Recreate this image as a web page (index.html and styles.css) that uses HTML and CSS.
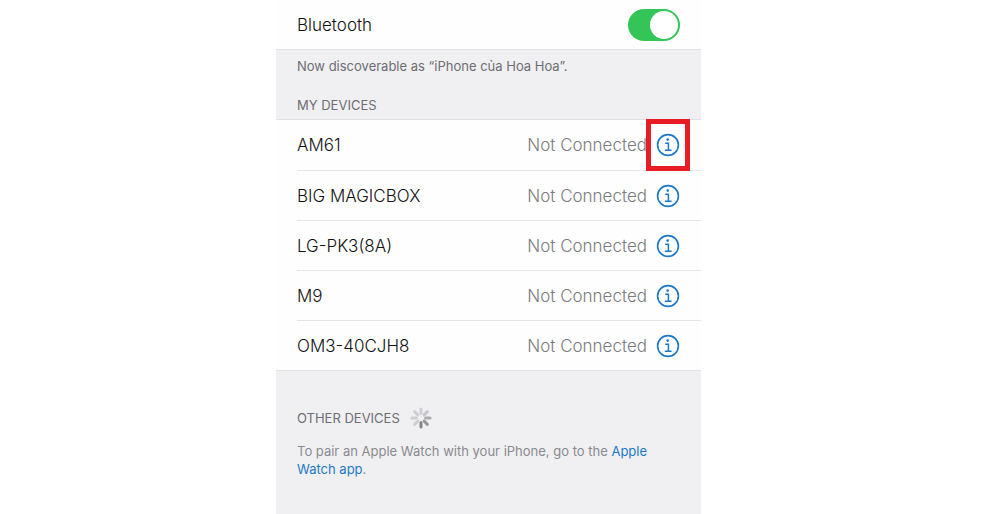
FILE: index.html
```html
<!DOCTYPE html>
<html lang="en">
<head>
  <meta charset="UTF-8" />
  <meta name="viewport" content="width=device-width, initial-scale=1.0" />
  <title>Bluetooth</title>
  <link rel="stylesheet" href="styles.css">
</head>
<body>
  <svg width="0" height="0" class="defs" aria-hidden="true">
    <symbol id="info" viewBox="0 0 24 24">
      <circle cx="12" cy="12" r="10.4" fill="none" stroke="currentColor" stroke-width="1.6" />
      <circle cx="11.7" cy="6.6" r="1.3" fill="currentColor" />
      <path d="M9.2 10.2H12.4V17.2M8.8 17.2H15.6" fill="none" stroke="currentColor" stroke-width="1.5" />
    </symbol>
  </svg>

  <main class="settings">
    <label class="row toggle-row" for="bluetooth">
      <span class="name">Bluetooth</span>
      <input type="checkbox" id="bluetooth" class="switch" checked />
    </label>

    <p class="note">Now discoverable as “iPhone của Hoa Hoa”.</p>
    <h2 class="heading">MY DEVICES</h2>

    <ul class="devices">
      <li class="row">
        <span class="name">AM61</span>
        <span class="status">Not Connected</span>
        <button class="info marked" aria-label="AM61 info"><svg><use href="#info" /></svg></button>
      </li>
      <li class="row">
        <span class="name">BIG MAGICBOX</span>
        <span class="status">Not Connected</span>
        <button class="info" aria-label="BIG MAGICBOX info"><svg><use href="#info" /></svg></button>
      </li>
      <li class="row">
        <span class="name">LG-PK3(8A)</span>
        <span class="status">Not Connected</span>
        <button class="info" aria-label="LG-PK3(8A) info"><svg><use href="#info" /></svg></button>
      </li>
      <li class="row">
        <span class="name">M9</span>
        <span class="status">Not Connected</span>
        <button class="info" aria-label="M9 info"><svg><use href="#info" /></svg></button>
      </li>
      <li class="row">
        <span class="name">OM3-40CJH8</span>
        <span class="status">Not Connected</span>
        <button class="info" aria-label="OM3-40CJH8 info"><svg><use href="#info" /></svg></button>
      </li>
    </ul>

    <div class="other">
      <h2 class="heading">OTHER DEVICES</h2>
      <svg class="spinner" viewBox="-11 -11 22 22" aria-hidden="true">
        <path d="M0 -4.5V-9" stroke="#cfcfd3" />
        <path d="M0 -4.5V-9" stroke="#c6c6ca" transform="rotate(45)" />
        <path d="M0 -4.5V-9" stroke="#ababaf" transform="rotate(90)" />
        <path d="M0 -4.5V-9" stroke="#98989b" transform="rotate(135)" />
        <path d="M0 -4.5V-9" stroke="#858588" transform="rotate(180)" />
        <path d="M0 -4.5V-9" stroke="#cfcfd3" transform="rotate(225)" />
        <path d="M0 -4.5V-9" stroke="#cfcfd3" transform="rotate(270)" />
        <path d="M0 -4.5V-9" stroke="#cfcfd3" transform="rotate(315)" />
      </svg>
    </div>
    <p class="pair">To pair an Apple Watch with your iPhone, go to the <a href="#">Apple Watch app</a>.</p>
  </main>
</body>
</html>
```
FILE: styles.css
```css
* {
  box-sizing: border-box;
}

body {
  display: grid;
  grid-template-columns: 12fr minmax(0, 425px) 13fr;
  min-height: 100vh;
  margin: 0;
  background: #fff;
  font-family: Inter, "Liberation Sans", sans-serif;
}

.defs {
  position: absolute;
}

.settings {
  grid-column: 2;
  background: #f0f0f3;
}

.row {
  display: flex;
  align-items: center;
  height: 50px;
  padding-right: 21px;
  font-size: 17px;
  font-weight: 300;
}

.name {
  flex: 1;
  color: #111;
}

.toggle-row {
  padding-left: 21px;
  border-bottom: 1px solid #e2e2e5;
  background: #fefefe;
}

.switch {
  appearance: none;
  display: flex;
  justify-content: flex-end;
  width: 52px;
  height: 32px;
  margin: 0;
  padding: 2px;
  border-radius: 16px;
  background: #34c558;
}

.switch::before {
  content: "";
  width: 28px;
  height: 28px;
  border-radius: 50%;
  background: #fff;
}

.switch:not(:checked) {
  justify-content: flex-start;
  background: #e2e2e5;
}

.note,
.pair {
  margin: 0;
  padding: 0 21px;
  font-size: 13px;
  line-height: 18px;
}

.note {
  padding-top: 7px;
  color: #6d6d72;
}

.heading {
  margin: 0;
  color: #6d6d72;
  font-size: 13px;
  font-weight: 400;
  line-height: 18px;
}

.note + .heading {
  padding: 21px 21px 5px;
}

.devices {
  margin: 0;
  padding: 0 0 0 21px;
  border-top: 1px solid #e2e2e5;
  border-bottom: 1px solid #e2e2e5;
  background: #fefefe;
  list-style: none;
}

.devices .row + .row {
  border-top: 1px solid #e6e6e8;
}

.status {
  color: #7c7c7f;
}

.info {
  position: relative;
  margin-left: 9px;
  padding: 0;
  border: 0;
  background: none;
  color: #1c78c8;
}

.info svg {
  display: block;
  width: 24px;
  height: 24px;
}

/* highlight around the first info button */
.marked::after {
  content: "";
  position: absolute;
  inset: -14px -10px;
  border: 5px solid #e81c24;
}

.other {
  display: flex;
  align-items: center;
  gap: 10px;
  padding: 36px 21px 0;
}

.spinner {
  width: 22px;
  height: 22px;
  stroke-width: 3;
  stroke-linecap: round;
}

.pair {
  padding-top: 13px;
  padding-bottom: 35px;
  color: #8a8a8f;
}

.pair a {
  color: #1c78c8;
  text-decoration: none;
}
```
